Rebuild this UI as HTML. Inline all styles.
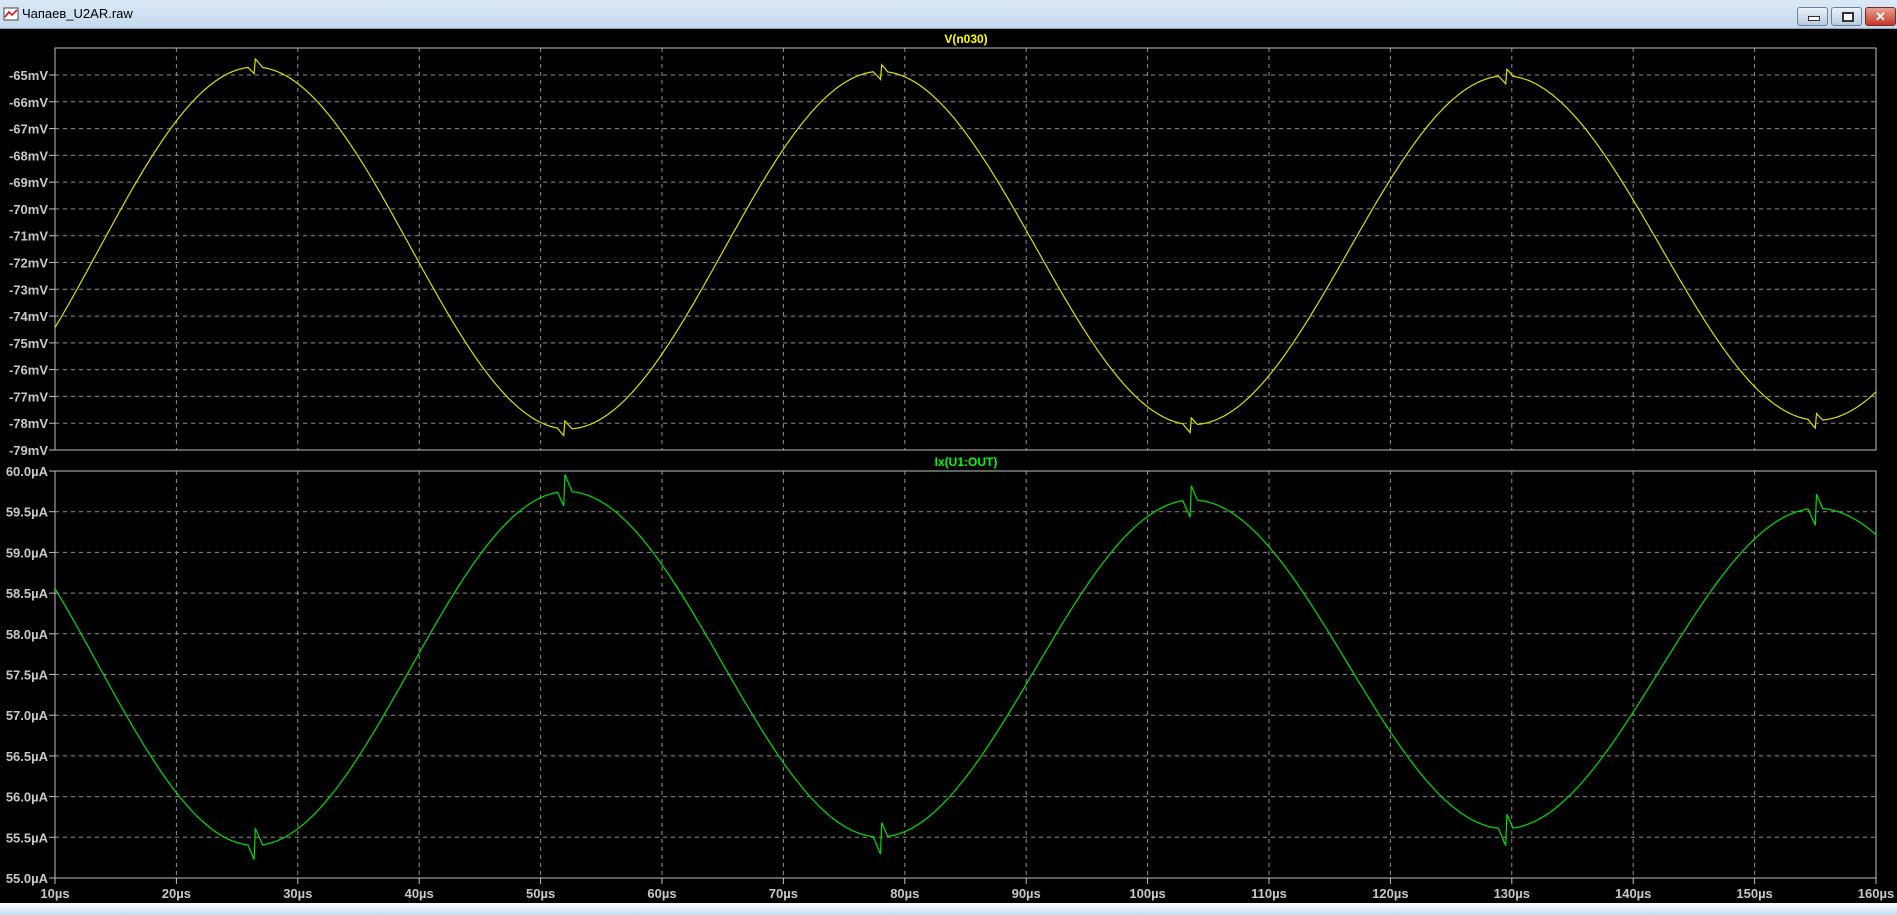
<!DOCTYPE html><html><head><style>
body{margin:0;width:1897px;height:915px;overflow:hidden;background:#000;font-family:"Liberation Sans",sans-serif}
#tb{position:absolute;left:0;top:0;width:1897px;height:28px;background:linear-gradient(#dbe9f7,#c5d9ee);border-bottom:1px solid #8aa0b8}
#tb span{position:absolute;left:22px;top:6px;font-size:13px;color:#000}
.btn{position:absolute;top:7px;height:17px;border:1px solid #6d7f95;border-radius:3px;background:linear-gradient(#eaf1f9,#b9cbe0)}
#bot{position:absolute;left:0;top:903px;width:1897px;height:12px;background:linear-gradient(#fff,#c5dcf0)}
</style></head><body>
<div id="tb"><svg width="16" height="16" style="position:absolute;left:3px;top:6px"><rect x="1" y="2" width="14" height="12" fill="#fff" stroke="#444"/><polyline points="2,11 6,6 9,9 14,4" fill="none" stroke="#d00" stroke-width="1.5"/></svg><span>Чапаев_U2AR.raw</span>
<div class="btn" style="left:1797px;width:29px"><div style="position:absolute;left:10px;top:8px;width:10px;height:3px;background:#fff;border:1px solid #333"></div></div>
<div class="btn" style="left:1831px;width:29px"><div style="position:absolute;left:10px;top:4px;width:8px;height:6px;border:2px solid #333;background:#fff"></div></div>
<div class="btn" style="left:1865px;width:29px;background:linear-gradient(#e9a08e,#c2382a);border-color:#7a2a22;color:#fff;font-weight:bold;text-align:center;font-size:13px;line-height:17px">✕</div>
</div>
<svg id="s" width="1897" height="915" style="position:absolute;left:0;top:0"></svg>
<div id="bot"></div>
<script>
var s=document.getElementById('s'),h='';
var L=55,R=1876,W=(R-L)/150;
function X(t){return L+(t-10)*W}
var T1=48,B1=450,T2=471,B2=878;
function grid(T,B){for(var i=1;i<15;i++){var x=X(10+i*10);h+='<line x1="'+x+'" y1="'+T+'" x2="'+x+'" y2="'+B+'" stroke="#909090" stroke-dasharray="4,4"/>';}}
grid(T1,B1);grid(T2,B2);
for(var k=0;k<=14;k++){var y=75+k*375/14;h+='<line x1="'+L+'" x2="'+R+'" y1="'+y+'" y2="'+y+'" stroke="#909090" stroke-dasharray="4,4"/><line x1="'+(L-6)+'" x2="'+L+'" y1="'+y+'" y2="'+y+'" stroke="#c0c0c0"/><text x="'+(L-7)+'" y="'+(y+5)+'" text-anchor="end" fill="#c8c8c8" font-size="13" font-weight="bold">'+(-65-k)+'mV</text>';}
for(var k=0;k<=10;k++){var y=T2+k*(B2-T2)/10;h+='<line x1="'+L+'" x2="'+R+'" y1="'+y+'" y2="'+y+'" stroke="#909090" stroke-dasharray="4,4"/><line x1="'+(L-6)+'" x2="'+L+'" y1="'+y+'" y2="'+y+'" stroke="#c0c0c0"/><text x="'+(L-7)+'" y="'+(y+5)+'" text-anchor="end" fill="#c8c8c8" font-size="13" font-weight="bold">'+(60-k*0.5).toFixed(1)+'µA</text>';}
for(var i=0;i<=15;i++){var x=X(10+i*10);h+='<line x1="'+x+'" x2="'+x+'" y1="'+B2+'" y2="'+(B2+6)+'" stroke="#c0c0c0"/><text x="'+x+'" y="'+(B2+20)+'" text-anchor="middle" fill="#c8c8c8" font-size="13" font-weight="bold">'+(10+i*10)+'µs</text>';}
h+='<rect x="'+L+'" y="'+T1+'" width="'+(R-L)+'" height="'+(B1-T1)+'" fill="none" stroke="#c0c0c0"/><rect x="'+L+'" y="'+T2+'" width="'+(R-L)+'" height="'+(B2-T2)+'" fill="none" stroke="#c0c0c0"/>';
h+='<text x="966" y="43" text-anchor="middle" fill="#ffff00" font-size="12" font-weight="bold">V(n030)</text><text x="966" y="466" text-anchor="middle" fill="#00ff00" font-size="12" font-weight="bold">Ix(U1:OUT)</text>';
var P=51.5,p1='',p2='';
for(var t=10;t<=160;t+=0.1){var ph=2*Math.PI*(t-26.5)/P,c=Math.cos(ph);
var g=0;[26.5,52,78,103.5,129.5,155].forEach(function(q){var d=t-q;if(Math.abs(d)<0.6)g+=(d<0?-1:1)*(0.6-Math.abs(d));});
var v=-71.5+(6.8-0.0032*(t-26))*c+g*0.5;
var y1=75+(-65-v)*375/14;
var cur=57.6-(2.2-0.002*(t-26))*c+g*0.35;
var y2=T2+(60-cur)*(B2-T2)/5;
var x=X(t).toFixed(1);p1+=(p1?'L':'M')+x+','+y1.toFixed(1);p2+=(p2?'L':'M')+x+','+y2.toFixed(1);}
h+='<path d="'+p1+'" fill="none" stroke="#e0e000" stroke-width="1.2"/><path d="'+p2+'" fill="none" stroke="#00e000" stroke-width="1.2"/>';
s.innerHTML=h;
</script></body></html>
